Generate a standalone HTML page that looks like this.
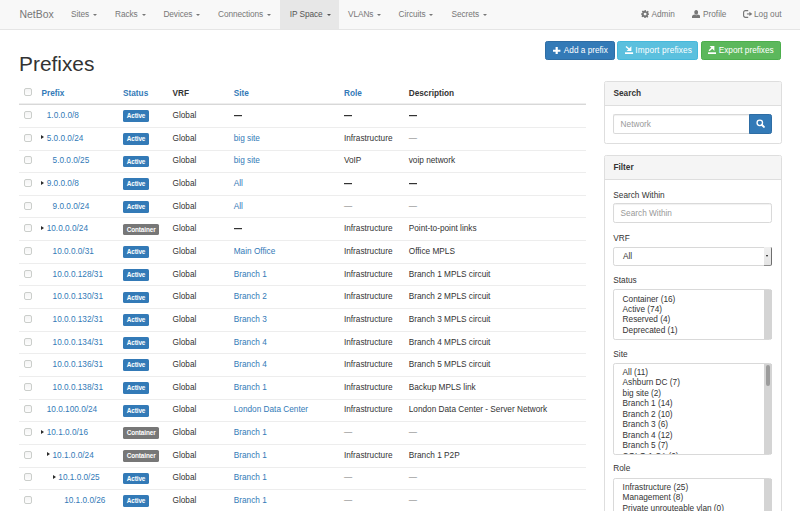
<!DOCTYPE html>
<html><head><meta charset="utf-8">
<style>
*{box-sizing:border-box;margin:0;padding:0}
html,body{width:800px;height:511px;overflow:hidden;background:#fff}
body{position:relative;font-family:"Liberation Sans",sans-serif;font-size:8.25px;color:#333;line-height:9.22px}
.t{position:absolute;white-space:nowrap;line-height:9.22px}
.a{color:#337ab7}
.b{font-weight:bold}
.m{color:#777}
.cb{position:absolute;width:8px;height:8px;border:1px solid #cbcecb;border-radius:2px;background:linear-gradient(#f4f4f4,#fdfdfd)}
.hline{position:absolute;left:19px;width:567px;height:1px;background:#d8d8d8;box-shadow:0 -1px 0 #eeeeee}
.rline{position:absolute;left:19px;width:567px;height:1px;background:#ededed}
.dd{position:absolute;width:7.9px;height:1px;background:#333;box-shadow:0 0.6px 0 rgba(51,51,51,.35)}
.caret{position:absolute;width:0;height:0;border-left:3.2px solid #2a2a2a;border-top:2.8px solid transparent;border-bottom:2.8px solid transparent}
.lab{position:absolute;font-weight:bold;font-size:6.4px;letter-spacing:-0.1px;line-height:11.6px;height:11.8px;padding:0 3.5px 0 3.7px;border-radius:1.6px;color:#fff;white-space:nowrap}
.lp{background:#337ab7}
.ld{background:#777}
/* navbar */
.nav{position:absolute;left:0;top:0;width:800px;height:30px;background:#f8f8f8;border-bottom:1px solid #e5e5e5}
.nav .brand{position:absolute;left:19.5px;top:9px;font-size:10.44px;line-height:11.66px;color:#777}
.nav ul{position:absolute;left:61.9px;top:0;list-style:none;display:flex;height:29px}
.nav li{padding:0 8.7px;height:29px;color:#777;white-space:nowrap;padding-top:10px;line-height:9.07px}
.nav li.act{background:#e7e7e7;color:#555}
.car{display:inline-block;width:0;height:0;margin-left:1.8px;vertical-align:1.3px;border-top:2.4px solid;border-left:2.4px solid transparent;border-right:2.4px solid transparent}
.nr{position:absolute;top:0;color:#777}
.ic{position:absolute}
h1{position:absolute;left:19px;top:52.1px;font-size:20.88px;line-height:23.3px;font-weight:normal;color:#333;white-space:nowrap}
.btn{position:absolute;top:40.8px;height:19.7px;border-radius:2.3px;color:#fff;border:1px solid}
.btn span{position:absolute;top:4.6px;white-space:nowrap;line-height:9.07px}
.panel{position:absolute;left:604.3px;width:177.2px;border:1px solid #ddd;border-radius:2.3px;background:#fff}
.ph{position:absolute;left:0;top:0;width:100%;background:#f5f5f5;border-bottom:1px solid #ddd;border-radius:2px 2px 0 0}
.fc{position:absolute;border:1px solid #d9d9d9;border-radius:2.3px;background:#fff;box-shadow:inset 0 1px 1px rgba(0,0,0,.06)}
.pbox{position:absolute;left:604.3px;width:177.3px;border:1px solid #dedede;border-radius:2.3px;background:#fff}
.phd{position:absolute;left:605.3px;width:175.3px;background:#f5f5f5;border-bottom:1px solid #dedede;border-radius:1.5px 1.5px 0 0}
.trk{position:absolute;width:7.8px;background:#d4d4d4}
.ms{box-shadow:none}
</style></head><body>
<div class="nav">
  <div class="brand">NetBox</div>
  <div style="position:absolute;left:280.3px;top:0;width:58.3px;height:29px;background:#e7e7e7"></div>
  <span class="t ni" style="font-size:8.3px;letter-spacing:-0.1px;left:71px;top:10px;color:#777">Sites <i class="car"></i></span>
  <span class="t ni" style="font-size:8.3px;letter-spacing:-0.1px;left:115px;top:10px;color:#777">Racks <i class="car"></i></span>
  <span class="t ni" style="font-size:8.3px;letter-spacing:-0.1px;left:163.45px;top:10px;color:#777">Devices <i class="car"></i></span>
  <span class="t ni" style="font-size:8.3px;letter-spacing:-0.1px;left:218.1px;top:10px;color:#777">Connections <i class="car"></i></span>
  <span class="t ni" style="font-size:8.3px;letter-spacing:-0.1px;left:289.8px;top:10px;color:#555">IP Space <i class="car"></i></span>
  <span class="t ni" style="font-size:8.3px;letter-spacing:-0.1px;left:348px;top:10px;color:#777">VLANs <i class="car"></i></span>
  <span class="t ni" style="font-size:8.3px;letter-spacing:-0.1px;left:398.6px;top:10px;color:#777">Circuits <i class="car"></i></span>
  <span class="t ni" style="font-size:8.3px;letter-spacing:-0.1px;left:451.6px;top:10px;color:#777">Secrets <i class="car"></i></span>
  <span class="t" style="left:651.5px;top:10px;color:#777">Admin</span>
  <span class="t" style="left:703px;top:10px;color:#777">Profile</span>
  <span class="t" style="left:754px;top:10px;color:#777">Log out</span>
  <!-- gear -->
  <svg class="ic" style="left:640.5px;top:10px" width="8.2" height="8.2" viewBox="0 0 16 16"><path fill="#777" d="M6.6 0h2.8l.4 2.2a6 6 0 0 1 1.5.7l1.9-1.3 2 2-1.3 1.9c.3.5.5 1 .7 1.5L16 6.6v2.8l-2.2.4a6 6 0 0 1-.7 1.5l1.3 1.9-2 2-1.9-1.3c-.5.3-1 .5-1.5.7L9.4 16H6.6l-.4-2.2a6 6 0 0 1-1.5-.7l-1.9 1.300-2-2 1.3-1.9a6 6 0 0 1-.7-1.5L0 9.4V6.6l2.2-.4c.2-.5.4-1 .7-1.5L1.6 2.8l2-2 1.9 1.3c.5-.3 1-.5 1.5-.7zM8 5.2a2.8 2.8 0 1 0 0 5.6 2.8 2.8 0 0 0 0-5.6z"/></svg>
  <!-- user -->
  <svg class="ic" style="left:691.6px;top:9.8px" width="8.4" height="8" viewBox="0 0 16 15"><path fill="#777" d="M8 0c2.4 0 3.6 1.8 3.6 4.2S10.4 8.8 8 8.8 4.4 6.6 4.4 4.2 5.6 0 8 0zM5 8.6c.9.8 1.9 1.2 3 1.2s2.1-.4 3-1.2c2.6.6 5 1.6 5 3.6V15H0v-2.8c0-2 2.4-3 5-3.6z"/></svg>
  <!-- log out -->
  <svg class="ic" style="left:742.8px;top:10px" width="10" height="8" viewBox="0 0 10 8"><path fill="none" stroke="#777" stroke-width="1.15" d="M5.2 0.6H2.4A1.8 1.8 0 0 0 0.6 2.4V5.5A1.8 1.8 0 0 0 2.4 7.3H5.2"/><path fill="none" stroke="#777" stroke-width="1.1" d="M3.9 3.95H7"/><path fill="#777" d="M6.4 1.8L9.3 3.95 6.4 6.1Z"/></svg>
</div>
<h1>Prefixes</h1>
<div class="btn" style="left:545px;width:70.2px;background:#337ab7;border-color:#2e6da4">
  <svg style="position:absolute;left:7.4px;top:4.9px" width="7.4" height="7.5" viewBox="0 0 7.4 7.5"><path fill="#fff" d="M2.6 0h2.2v2.65H7.4v2.2H4.8V7.5H2.6V4.85H0v-2.2h2.6z"/></svg>
  <span style="left:17.8px">Add a prefix</span></div>
<div class="btn" style="left:617.2px;width:80.8px;background:#5bc0de;border-color:#46b8da">
  <svg style="position:absolute;left:7.2px;top:4.4px" width="8.2" height="8.2" viewBox="0 0 8.2 8.2"><rect x="0" y="6.3" width="8.1" height="1.9" fill="#fff"/><path fill="#fff" d="M6.4 0.3V5.1H1.6z"/><path stroke="#fff" stroke-width="1.4" d="M1.0 0.5L4.2 3.3"/></svg>
  <span style="left:17.0px;letter-spacing:0.16px">Import prefixes</span></div>
<div class="btn" style="left:700.5px;width:80.6px;background:#5cb85c;border-color:#4cae4c">
  <svg style="position:absolute;left:6.1px;top:3.9px" width="8.2" height="8.2" viewBox="0 0 8.2 8.2"><rect x="0" y="6.3" width="8.1" height="1.9" fill="#fff"/><path fill="#fff" d="M6.4 0.1V4.9L1.6 0.1z"/><path stroke="#fff" stroke-width="1.4" d="M1.0 4.7L4.2 1.9"/></svg>
  <span style="left:17.2px">Export prefixes</span></div>
<i class="cb" style="left:24.00px;top:87.70px"></i>
<span class="t a b" style="left:41.54px;top:89.03px">Prefix</span>
<span class="t a b" style="left:123.04px;top:89.03px">Status</span>
<span class="t b" style="left:172.54px;top:89.03px">VRF</span>
<span class="t a b" style="left:233.74px;top:89.03px">Site</span>
<span class="t a b" style="left:343.94px;top:89.03px">Role</span>
<span class="t b" style="left:408.74px;top:89.03px">Description</span>
<div class="hline" style="top:104px"></div>
<i class="cb" style="left:24.00px;top:111.00px"></i>
<span class="t a" style="left:46.76px;top:111.03px">1.0.0.0/8</span>
<span class="lab lp" style="left:123.04px;top:110.30px">Active</span>
<span class="t " style="left:172.54px;top:111.03px">Global</span>
<i class="dd" style="left:234.04px;top:114.90px"></i>
<i class="dd" style="left:344.24px;top:114.90px"></i>
<i class="dd" style="left:409.04px;top:114.90px"></i>
<div class="rline" style="top:126.85px"></div>
<i class="cb" style="left:24.00px;top:133.65px"></i>
<i class="caret" style="left:41.14px;top:135.25px"></i>
<span class="t a" style="left:46.70px;top:133.68px">5.0.0.0/24</span>
<span class="lab lp" style="left:123.04px;top:132.95px">Active</span>
<span class="t " style="left:172.54px;top:133.68px">Global</span>
<span class="t a" style="left:233.74px;top:133.68px">big site</span>
<span class="t " style="left:343.94px;top:133.68px">Infrastructure</span>
<span class="t m" style="left:408.74px;top:133.68px">—</span>
<div class="rline" style="top:149.50px"></div>
<i class="cb" style="left:24.00px;top:156.30px"></i>
<span class="t a" style="left:52.56px;top:156.33px">5.0.0.0/25</span>
<span class="lab lp" style="left:123.04px;top:155.60px">Active</span>
<span class="t " style="left:172.54px;top:156.33px">Global</span>
<span class="t a" style="left:233.74px;top:156.33px">big site</span>
<span class="t " style="left:343.94px;top:156.33px">VoIP</span>
<span class="t " style="left:408.74px;top:156.33px">voip network</span>
<div class="rline" style="top:172.15px"></div>
<i class="cb" style="left:24.00px;top:178.95px"></i>
<i class="caret" style="left:41.14px;top:180.55px"></i>
<span class="t a" style="left:46.70px;top:178.98px">9.0.0.0/8</span>
<span class="lab lp" style="left:123.04px;top:178.25px">Active</span>
<span class="t " style="left:172.54px;top:178.98px">Global</span>
<span class="t a" style="left:233.74px;top:178.98px">All</span>
<i class="dd" style="left:344.24px;top:182.85px"></i>
<i class="dd" style="left:409.04px;top:182.85px"></i>
<div class="rline" style="top:194.80px"></div>
<i class="cb" style="left:24.00px;top:201.60px"></i>
<span class="t a" style="left:52.56px;top:201.63px">9.0.0.0/24</span>
<span class="lab lp" style="left:123.04px;top:200.90px">Active</span>
<span class="t " style="left:172.54px;top:201.63px">Global</span>
<span class="t a" style="left:233.74px;top:201.63px">All</span>
<span class="t m" style="left:343.94px;top:201.63px">—</span>
<span class="t m" style="left:408.74px;top:201.63px">—</span>
<div class="rline" style="top:217.45px"></div>
<i class="cb" style="left:24.00px;top:224.25px"></i>
<i class="caret" style="left:41.14px;top:225.85px"></i>
<span class="t a" style="left:46.70px;top:224.28px">10.0.0.0/24</span>
<span class="lab ld" style="left:123.04px;top:223.55px">Container</span>
<span class="t " style="left:172.54px;top:224.28px">Global</span>
<i class="dd" style="left:234.04px;top:228.15px"></i>
<span class="t " style="left:343.94px;top:224.28px">Infrastructure</span>
<span class="t " style="left:408.74px;top:224.28px">Point-to-point links</span>
<div class="rline" style="top:240.10px"></div>
<i class="cb" style="left:24.00px;top:246.90px"></i>
<span class="t a" style="left:52.56px;top:246.93px">10.0.0.0/31</span>
<span class="lab lp" style="left:123.04px;top:246.20px">Active</span>
<span class="t " style="left:172.54px;top:246.93px">Global</span>
<span class="t a" style="left:233.74px;top:246.93px">Main Office</span>
<span class="t " style="left:343.94px;top:246.93px">Infrastructure</span>
<span class="t " style="left:408.74px;top:246.93px">Office MPLS</span>
<div class="rline" style="top:262.75px"></div>
<i class="cb" style="left:24.00px;top:269.55px"></i>
<span class="t a" style="left:52.56px;top:269.58px">10.0.0.128/31</span>
<span class="lab lp" style="left:123.04px;top:268.85px">Active</span>
<span class="t " style="left:172.54px;top:269.58px">Global</span>
<span class="t a" style="left:233.74px;top:269.58px">Branch 1</span>
<span class="t " style="left:343.94px;top:269.58px">Infrastructure</span>
<span class="t " style="left:408.74px;top:269.58px">Branch 1 MPLS circuit</span>
<div class="rline" style="top:285.40px"></div>
<i class="cb" style="left:24.00px;top:292.20px"></i>
<span class="t a" style="left:52.56px;top:292.23px">10.0.0.130/31</span>
<span class="lab lp" style="left:123.04px;top:291.50px">Active</span>
<span class="t " style="left:172.54px;top:292.23px">Global</span>
<span class="t a" style="left:233.74px;top:292.23px">Branch 2</span>
<span class="t " style="left:343.94px;top:292.23px">Infrastructure</span>
<span class="t " style="left:408.74px;top:292.23px">Branch 2 MPLS circuit</span>
<div class="rline" style="top:308.05px"></div>
<i class="cb" style="left:24.00px;top:314.85px"></i>
<span class="t a" style="left:52.56px;top:314.88px">10.0.0.132/31</span>
<span class="lab lp" style="left:123.04px;top:314.15px">Active</span>
<span class="t " style="left:172.54px;top:314.88px">Global</span>
<span class="t a" style="left:233.74px;top:314.88px">Branch 3</span>
<span class="t " style="left:343.94px;top:314.88px">Infrastructure</span>
<span class="t " style="left:408.74px;top:314.88px">Branch 3 MPLS circuit</span>
<div class="rline" style="top:330.70px"></div>
<i class="cb" style="left:24.00px;top:337.50px"></i>
<span class="t a" style="left:52.56px;top:337.53px">10.0.0.134/31</span>
<span class="lab lp" style="left:123.04px;top:336.80px">Active</span>
<span class="t " style="left:172.54px;top:337.53px">Global</span>
<span class="t a" style="left:233.74px;top:337.53px">Branch 4</span>
<span class="t " style="left:343.94px;top:337.53px">Infrastructure</span>
<span class="t " style="left:408.74px;top:337.53px">Branch 4 MPLS circuit</span>
<div class="rline" style="top:353.35px"></div>
<i class="cb" style="left:24.00px;top:360.15px"></i>
<span class="t a" style="left:52.56px;top:360.18px">10.0.0.136/31</span>
<span class="lab lp" style="left:123.04px;top:359.45px">Active</span>
<span class="t " style="left:172.54px;top:360.18px">Global</span>
<span class="t a" style="left:233.74px;top:360.18px">Branch 4</span>
<span class="t " style="left:343.94px;top:360.18px">Infrastructure</span>
<span class="t " style="left:408.74px;top:360.18px">Branch 5 MPLS circuit</span>
<div class="rline" style="top:376.00px"></div>
<i class="cb" style="left:24.00px;top:382.80px"></i>
<span class="t a" style="left:52.56px;top:382.83px">10.0.0.138/31</span>
<span class="lab lp" style="left:123.04px;top:382.10px">Active</span>
<span class="t " style="left:172.54px;top:382.83px">Global</span>
<span class="t a" style="left:233.74px;top:382.83px">Branch 1</span>
<span class="t " style="left:343.94px;top:382.83px">Infrastructure</span>
<span class="t " style="left:408.74px;top:382.83px">Backup MPLS link</span>
<div class="rline" style="top:398.65px"></div>
<i class="cb" style="left:24.00px;top:405.45px"></i>
<span class="t a" style="left:46.76px;top:405.48px">10.0.100.0/24</span>
<span class="lab lp" style="left:123.04px;top:404.75px">Active</span>
<span class="t " style="left:172.54px;top:405.48px">Global</span>
<span class="t a" style="left:233.74px;top:405.48px">London Data Center</span>
<span class="t " style="left:343.94px;top:405.48px">Infrastructure</span>
<span class="t " style="left:408.74px;top:405.48px">London Data Center - Server Network</span>
<div class="rline" style="top:421.30px"></div>
<i class="cb" style="left:24.00px;top:428.10px"></i>
<i class="caret" style="left:41.14px;top:429.70px"></i>
<span class="t a" style="left:46.70px;top:428.13px">10.1.0.0/16</span>
<span class="lab ld" style="left:123.04px;top:427.40px">Container</span>
<span class="t " style="left:172.54px;top:428.13px">Global</span>
<span class="t a" style="left:233.74px;top:428.13px">Branch 1</span>
<span class="t m" style="left:343.94px;top:428.13px">—</span>
<span class="t m" style="left:408.74px;top:428.13px">—</span>
<div class="rline" style="top:443.95px"></div>
<i class="cb" style="left:24.00px;top:450.75px"></i>
<i class="caret" style="left:46.94px;top:452.35px"></i>
<span class="t a" style="left:52.50px;top:450.78px">10.1.0.0/24</span>
<span class="lab ld" style="left:123.04px;top:450.05px">Container</span>
<span class="t " style="left:172.54px;top:450.78px">Global</span>
<span class="t a" style="left:233.74px;top:450.78px">Branch 1</span>
<span class="t " style="left:343.94px;top:450.78px">Infrastructure</span>
<span class="t " style="left:408.74px;top:450.78px">Branch 1 P2P</span>
<div class="rline" style="top:466.60px"></div>
<i class="cb" style="left:24.00px;top:473.40px"></i>
<i class="caret" style="left:52.74px;top:475.00px"></i>
<span class="t a" style="left:58.30px;top:473.43px">10.1.0.0/25</span>
<span class="lab lp" style="left:123.04px;top:472.70px">Active</span>
<span class="t " style="left:172.54px;top:473.43px">Global</span>
<span class="t a" style="left:233.74px;top:473.43px">Branch 1</span>
<span class="t m" style="left:343.94px;top:473.43px">—</span>
<span class="t m" style="left:408.74px;top:473.43px">—</span>
<div class="rline" style="top:489.25px"></div>
<i class="cb" style="left:24.00px;top:496.05px"></i>
<span class="t a" style="left:64.16px;top:496.08px">10.1.0.0/26</span>
<span class="lab lp" style="left:123.04px;top:495.35px">Active</span>
<span class="t " style="left:172.54px;top:496.08px">Global</span>
<span class="t a" style="left:233.74px;top:496.08px">Branch 1</span>
<span class="t m" style="left:343.94px;top:496.08px">—</span>
<span class="t m" style="left:408.74px;top:496.08px">—</span>
<div class="rline" style="top:511.90px"></div>
<i class="cb" style="left:24.00px;top:518.70px"></i>
<span class="t a" style="left:46.76px;top:518.73px">10.1.0.128/25</span>
<span class="lab lp" style="left:123.04px;top:518.00px">Active</span>
<span class="t " style="left:172.54px;top:518.73px">Global</span>
<span class="t a" style="left:233.74px;top:518.73px">Branch 1</span>
<span class="t m" style="left:343.94px;top:518.73px">—</span>
<span class="t m" style="left:408.74px;top:518.73px">—</span>
<!-- search panel -->
<div class="pbox" style="top:81.4px;height:62.8px"></div>
<div class="phd" style="top:82.4px;height:23.6px"></div>
<span class="t b" style="left:613.5px;top:88.93px">Search</span>
<div class="fc" style="left:613.1px;top:114.4px;width:136.6px;height:19.6px;border-radius:2.3px 0 0 2.3px;border-right:0"></div>
<span class="t" style="left:620.6px;top:120.13px;color:#999">Network</span>
<div style="position:absolute;left:749.2px;top:114.4px;width:22.9px;height:19.6px;background:#337ab7;border:1px solid #2e6da4;border-radius:0 2.3px 2.3px 0"></div>
<svg style="position:absolute;left:755.8px;top:119.4px" width="9" height="9" viewBox="0 0 9 9"><circle cx="3.8" cy="3.8" r="2.75" fill="none" stroke="#fff" stroke-width="1.35"/><path stroke="#fff" stroke-width="2" stroke-linecap="round" d="M6 6L7.9 7.9"/></svg>
<!-- filter panel -->
<div class="pbox" style="top:155.3px;height:400px"></div>
<div class="phd" style="top:156.3px;height:23.6px"></div>
<span class="t b" style="left:613.5px;top:162.73px">Filter</span>
<span class="t" style="left:613.3px;top:190.53px">Search Within</span>
<div class="fc" style="left:613.1px;top:203.2px;width:159px;height:19.6px"></div>
<span class="t" style="left:620.6px;top:209.13px;color:#999">Search Within</span>
<span class="t" style="left:613.3px;top:233.53px">VRF</span>
<div class="fc" style="left:613.1px;top:246.9px;width:158.7px;height:19px;box-shadow:none;border-color:#d8d8d8"></div>
<div style="position:absolute;left:764px;top:247.4px;width:7.8px;height:18.2px;background:linear-gradient(#f0f0f0,#e4e4e4);border-right:1.6px solid #6e6e6e;border-bottom:1.6px solid #8c8c8c;border-radius:0 1.5px 2px 0"></div>
<i style="position:absolute;left:765.9px;top:255px;width:0;height:0;border-top:2.2px solid #111;border-left:1.6px solid transparent;border-right:1.6px solid transparent"></i>
<span class="t" style="left:623px;top:252.13px">All</span>
<span class="t" style="left:613.3px;top:276.23px">Status</span>
<div class="fc ms" style="left:613.2px;top:289.3px;width:158.9px;height:50.4px"></div>
<div class="trk" style="left:764.3px;top:289.8px;height:49.4px"></div>
<span class="t " style="left:622.60px;top:294.53px">Container (16)</span>
<span class="t " style="left:622.60px;top:304.98px">Active (74)</span>
<span class="t " style="left:622.60px;top:315.43px">Reserved (4)</span>
<span class="t " style="left:622.60px;top:325.88px">Deprecated (1)</span>
<span class="t" style="left:613.3px;top:349.53px">Site</span>
<div class="fc ms" style="left:613.2px;top:363px;width:158.9px;height:91.5px"></div>
<div class="trk" style="left:764.3px;top:363.5px;height:90.5px"></div>
<div style="position:absolute;left:766px;top:364.8px;width:3.9px;height:21px;border-radius:2px;background:#9c9c9c"></div>
<div style="position:absolute;left:0;top:0;width:800px;height:453.5px;overflow:hidden"><span class="t " style="left:622.60px;top:367.93px">All (11)</span>
<span class="t " style="left:622.60px;top:378.38px">Ashburn DC (7)</span>
<span class="t " style="left:622.60px;top:388.83px">big site (2)</span>
<span class="t " style="left:622.60px;top:399.28px">Branch 1 (14)</span>
<span class="t " style="left:622.60px;top:409.73px">Branch 2 (10)</span>
<span class="t " style="left:622.60px;top:420.18px">Branch 3 (6)</span>
<span class="t " style="left:622.60px;top:430.63px">Branch 4 (12)</span>
<span class="t " style="left:622.60px;top:441.08px">Branch 5 (7)</span>
<span class="t " style="left:622.60px;top:451.53px">COLO 1 CA (0)</span></div>
<span class="t" style="left:613.3px;top:463.93px">Role</span>
<div class="fc ms" style="left:613.2px;top:478px;width:158.9px;height:60px"></div>
<div class="trk" style="left:764.3px;top:478.5px;height:60px"></div>
<span class="t " style="left:622.60px;top:482.93px">Infrastructure (25)</span>
<span class="t " style="left:622.60px;top:493.38px">Management (8)</span>
<span class="t " style="left:622.60px;top:503.83px">Private unrouteable vlan (0)</span>
</body></html>
